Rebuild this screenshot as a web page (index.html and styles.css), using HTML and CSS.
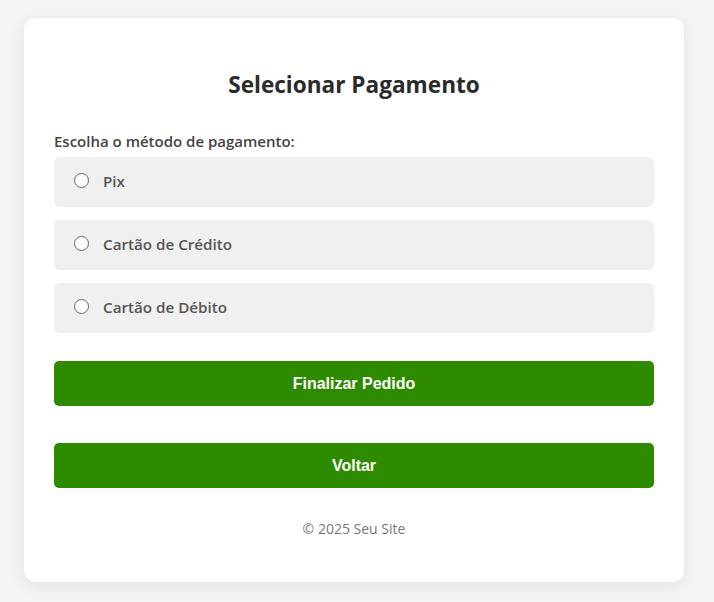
FILE: index.html
```html
<!DOCTYPE html>
<html lang="pt-BR">
<head>
<meta charset="utf-8">
<title>Selecionar Pagamento</title>
<link rel="stylesheet" href="styles.css">
</head>
<body>
<div class="card">
  <h2 class="title">Selecionar Pagamento</h2>
  <p class="label">Escolha o método de pagamento:</p>
  <div class="options">
    <label class="option"><input class="radio" type="radio" name="pay"><span class="option-text">Pix</span></label>
    <label class="option"><input class="radio" type="radio" name="pay"><span class="option-text">Cartão de Crédito</span></label>
    <label class="option"><input class="radio" type="radio" name="pay"><span class="option-text">Cartão de Débito</span></label>
  </div>
  <button class="btn btn-first">Finalizar Pedido</button>
  <button class="btn btn-second">Voltar</button>
  <p class="footer">© 2025 Seu Site</p>
</div>
</body>
</html>
```
FILE: styles.css
```css
html, body {
  margin: 0;
  padding: 0;
}
body {
  background: #f4f4f4;
  font-family: "Segoe UI", "Open Sans", "Noto Sans", sans-serif;
  color: #333;
  padding: 18px 30px 20px 24px;
}
.card {
  background: #fff;
  border-radius: 12px;
  box-shadow: 0 4px 16px rgba(0,0,0,0.08);
  padding: 30px 30px 44px;
  width: 600px;
}
.title {
  margin: 21px 0 30px;
  text-align: center;
  font-size: 22.6px;
  line-height: 32px;
  font-weight: 700;
  color: #2b2b2b;
}
.label {
  margin: 0 0 5px;
  font-size: 15px;
  line-height: 21px;
  font-weight: 600;
  color: #444;
}
.options {
  display: flex;
  flex-direction: column;
  gap: 13px;
}
.option {
  display: flex;
  align-items: center;
  gap: 14px;
  height: 50px;
  box-sizing: border-box;
  padding: 0 20px 3px;
  background: #f0f0f0;
  border-radius: 6px;
  font-size: 15.2px;
  font-weight: 600;
  color: #555;
}
.radio {
  appearance: none;
  -webkit-appearance: none;
  margin: 0;
  width: 15px;
  height: 15px;
  box-sizing: border-box;
  border: 1px solid #666;
  border-radius: 50%;
  background: #fff;
  flex-shrink: 0;
}
.btn {
  display: block;
  width: 100%;
  height: 45px;
  border: none;
  border-radius: 5px;
  background: #2e8b00;
  color: #fff;
  font-family: "Liberation Sans", Arial, sans-serif;
  font-weight: 700;
  font-size: 16px;
}
.btn-first {
  margin-top: 28px;
}
.btn-second {
  margin-top: 37px;
}
.footer {
  margin: 31px 0 0;
  text-align: center;
  font-size: 14px;
  line-height: 19px;
  color: #777;
}
```
